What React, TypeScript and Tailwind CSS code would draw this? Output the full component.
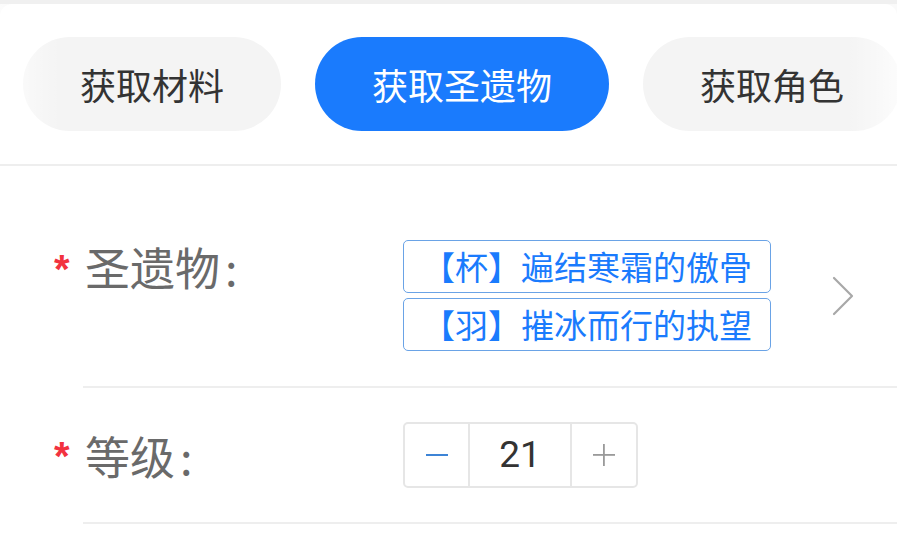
const cjk = "font-['Noto_Sans_CJK_SC','Noto_Sans',sans-serif]";

const tabs = [
  { label: "获取材料", active: false },
  { label: "获取圣遗物", active: true },
  { label: "获取角色", active: false },
];

const artifacts = ["【杯】遍结寒霜的傲骨", "【羽】摧冰而行的执望"];

function Required() {
  return (
    <span className="-ml-[29px] w-[29px] shrink-0 pt-[3px] font-['Liberation_Sans',sans-serif] text-[40px] font-bold leading-[53px] text-[#f2323f]">
      *
    </span>
  );
}

function Label({ text }: { text: string }) {
  return (
    <div className="w-[320px] shrink-0 pl-[2px] text-[45px] leading-[53px] text-[#6a6a6a]">
      {text}
      <span className="ml-[5px]">:</span>
    </div>
  );
}

export default function App() {
  return (
    <div className={`h-[550px] w-[897px] overflow-hidden bg-[#f0f0f0] pt-[4px] ${cjk}`}>
      <div className="h-full rounded-t-[12px] bg-white">
        {/* tab switcher */}
        <div className="relative flex h-[160px] items-center gap-[34px] overflow-hidden pl-[23px]">
          {tabs.map((t) => (
            <div
              key={t.label}
              className={
                "flex h-[94px] shrink-0 items-center justify-center rounded-full px-[57px] text-[36px] " +
                (t.active ? "bg-[#1a7bfd] text-white" : "bg-[#f4f4f4] text-[#333]")
              }
            >
              {t.label}
            </div>
          ))}
          <div className="absolute inset-y-0 left-0 w-[60px] bg-gradient-to-r from-white/80 to-transparent" />
          <div className="absolute inset-y-0 right-0 w-[50px] bg-gradient-to-l from-white/70 to-transparent" />
        </div>
        <div className="h-[2px] bg-[#eeeeee]" />

        {/* form */}
        <div className="ml-[83px] pt-[37px]">
          <div className="flex items-start border-b-2 border-[#eeeeee] pt-[37px] pb-[35px]">
            <Required />
            <Label text="圣遗物" />
            <div className="flex flex-col gap-[5px]">
              {artifacts.map((a) => (
                <div
                  key={a}
                  className="flex h-[53px] w-[368px] items-center justify-center rounded-[5px] border border-[#6aa3e6] text-[33px] text-[#1a7bfd]"
                >
                  {a}
                </div>
              ))}
            </div>
            <svg className="mr-[43px] ml-auto self-center" width="22" height="40" viewBox="0 0 22 40" fill="none">
              <path d="M2 2 L20 20 L2 38" stroke="#a8a8a8" strokeWidth="2.2" strokeLinecap="round" strokeLinejoin="round" />
            </svg>
          </div>

          <div className="flex items-center border-b-2 border-[#eeeeee] pt-[34px] pb-[34px]">
            <Required />
            <Label text="等级" />
            <div className="flex h-[66px] w-[235px] rounded-[5px] border-2 border-[#e6e6e6]">
              <div className="flex w-[63px] items-center justify-center">
                <svg width="22" height="4" viewBox="0 0 22 4">
                  <rect x="0" y="1" width="22" height="2" fill="#3d84d6" />
                </svg>
              </div>
              <div className="flex w-[104px] items-center justify-center border-x-2 border-[#e6e6e6] font-['Roboto',sans-serif] text-[37px] text-[#333]">
                21
              </div>
              <div className="flex flex-1 items-center justify-center">
                <svg width="22" height="22" viewBox="0 0 22 22">
                  <rect x="0" y="10" width="22" height="1.8" fill="#9a9a9a" />
                  <rect x="10" y="0" width="1.8" height="22" fill="#9a9a9a" />
                </svg>
              </div>
            </div>
          </div>
        </div>
      </div>
    </div>
  );
}
